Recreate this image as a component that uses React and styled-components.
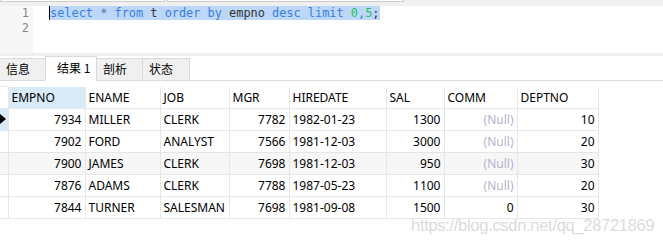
import styled, { createGlobalStyle } from "styled-components";

const GlobalStyles = createGlobalStyle`
  html, body {
    margin: 0;
    padding: 0;
    background: #fff;
  }
  body {
    width: 663px;
    height: 244px;
    overflow: hidden;
    font-family: "Noto Sans", "Noto Sans CJK SC", sans-serif;
  }
`;

const Page = styled.div`
  position: relative;
  width: 663px;
  height: 244px;
  overflow: hidden;
`;

const TopStrip = styled.div`
  height: 6px;
  background: #f0f0f0;
  display: flex;
  gap: 2px;
`;

const StripBox = styled.div`
  width: ${(p) => p.w}px;
  height: 1px;
  background: #fafafa;
  border: 1px solid #cfcfcf;
  border-top: none;
`;

const Editor = styled.div`
  height: 47px;
  display: flex;
`;

const Gutter = styled.div`
  width: 33px;
  background: #f7f7f7;
  color: #8a8a8a;
  font-family: "DejaVu Sans Mono", monospace;
  font-size: 12px;
  line-height: 15px;
  text-align: right;
  padding-right: 4px;
  box-sizing: border-box;
`;

const Code = styled.div`
  padding-left: 17px;
  font-family: "DejaVu Sans Mono", monospace;
  font-size: 11.9px;
  line-height: 15px;
`;

const Line = styled.div`
  height: 15px;
  white-space: pre;
`;

const Selected = styled.span`
  background: #bcd7f7;
  border-left: 1px solid #000;
  margin-left: -1px;
`;

const Tok = styled.span`
  color: ${(p) => p.c};
`;

const Splitter = styled.div`
  height: 3px;
  background: #f0f0f0;
`;

const TabBar = styled.div`
  height: 25px;
  display: flex;
  align-items: flex-end;
  border-bottom: 1px solid #d9d9d9;
  box-sizing: border-box;
`;

const Tab = styled.div`
  width: ${(p) => p.w}px;
  height: ${(p) => (p.active ? 25 : 22)}px;
  box-sizing: border-box;
  background: ${(p) => (p.active ? "#fff" : "#f0f0f0")};
  border: 1px solid #d9d9d9;
  border-left: ${(p) => (p.first ? "none" : "1px solid #d9d9d9")};
  border-bottom: ${(p) => (p.active ? "1px solid #fff" : "none")};
  margin-bottom: ${(p) => (p.active ? -1 : 0)}px;
  margin-left: -1px;
  padding-left: ${(p) => (p.active ? 11 : 6)}px;
  font-family: "Noto Sans CJK SC", sans-serif;
  font-size: 12px;
  line-height: ${(p) => (p.active ? 22 : 20)}px;
  color: #000;
  &:first-child {
    margin-left: 0;
  }
`;

const TableWrap = styled.div`
  padding-top: 5px;
`;

const Grid = styled.table`
  border-collapse: collapse;
  table-layout: fixed;
  font-family: "Noto Sans", sans-serif;
  font-size: 12px;
  color: #000;
`;

const HeadCell = styled.th`
  height: 21px;
  padding: 0 3px;
  text-align: left;
  font-weight: normal;
  border: 1px solid #e6e6e6;
  border-top: none;
  background: ${(p) => (p.sel ? "#d9eaf9" : "#fff")};
  white-space: nowrap;
  overflow: hidden;
`;

const Row = styled.tr`
  background: ${(p) => (p.alt ? "#f7f7f7" : "#fff")};
`;

const Cell = styled.td`
  height: 21px;
  padding: 0 3px;
  border: 1px solid #e6e6e6;
  text-align: ${(p) => (p.num ? "right" : "left")};
  color: ${(p) => (p.nil ? "#b4b4cc" : "#000")};
  white-space: nowrap;
  overflow: hidden;
`;

const Marker = styled.td`
  padding: 0;
  border: 1px solid #e6e6e6;
  border-left: none;
  background: ${(p) => (p.cur ? "#d9eaf9" : "transparent")};
`;

const Arrow = styled.div`
  width: 0;
  height: 0;
  border-top: 5px solid transparent;
  border-bottom: 5px solid transparent;
  border-left: 6px solid #000;
`;

const Watermark = styled.div`
  position: absolute;
  left: 411px;
  top: 217px;
  font-family: "Liberation Sans", Arial, sans-serif;
  font-size: 16.5px;
  letter-spacing: -0.3px;
  line-height: 1;
  color: #dcdcdc;
  white-space: nowrap;
`;

const widths = [8, 77, 75, 69, 60, 97, 58, 73, 81];
const cols = ["EMPNO", "ENAME", "JOB", "MGR", "HIREDATE", "SAL", "COMM", "DEPTNO"];
const rows = [
  ["7934", "MILLER", "CLERK", "7782", "1982-01-23", "1300", null, "10"],
  ["7902", "FORD", "ANALYST", "7566", "1981-12-03", "3000", null, "20"],
  ["7900", "JAMES", "CLERK", "7698", "1981-12-03", "950", null, "30"],
  ["7876", "ADAMS", "CLERK", "7788", "1987-05-23", "1100", null, "20"],
  ["7844", "TURNER", "SALESMAN", "7698", "1981-09-08", "1500", "0", "30"],
];
const numeric = [true, false, false, true, false, true, true, true];

const KW = "#3a7fe0";

export default function App() {
  return (
    <Page>
      <GlobalStyles />
      <TopStrip>
        <StripBox w={163} />
        <StripBox w={235} />
      </TopStrip>
      <Editor>
        <Gutter>
          <div>1</div>
          <div>2</div>
        </Gutter>
        <Code>
          <Line>
            <Selected>
              <Tok c={KW}>select</Tok> <Tok c="#5a7aa8">*</Tok> <Tok c={KW}>from</Tok>{" "}
              <Tok c="#333">t</Tok> <Tok c={KW}>order by</Tok> <Tok c="#333">empno</Tok>{" "}
              <Tok c={KW}>desc</Tok> <Tok c={KW}>limit</Tok> <Tok c="#1fc35a">0</Tok>
              <Tok c={KW}>,</Tok>
              <Tok c="#1fc35a">5</Tok>
              <Tok c="#333">;</Tok>
            </Selected>
          </Line>
          <Line />
        </Code>
      </Editor>
      <Splitter />
      <TabBar>
        <Tab w={46} first>信息</Tab>
        <Tab w={52} active>结果 1</Tab>
        <Tab w={47}>剖析</Tab>
        <Tab w={48}>状态</Tab>
      </TabBar>
      <TableWrap>
        <Grid>
          <colgroup>
            {widths.map((w, i) => (
              <col key={i} style={{ width: w }} />
            ))}
          </colgroup>
          <thead>
            <tr>
              <Marker as="th" />
              {cols.map((c, i) => (
                <HeadCell key={c} sel={i === 0}>
                  {c}
                </HeadCell>
              ))}
            </tr>
          </thead>
          <tbody>
            {rows.map((r, ri) => (
              <Row key={ri} alt={ri === 2}>
                <Marker cur={ri === 0}>{ri === 0 && <Arrow />}</Marker>
                {r.map((v, ci) => (
                  <Cell key={ci} num={numeric[ci]} nil={v === null}>
                    {v === null ? "(Null)" : v}
                  </Cell>
                ))}
              </Row>
            ))}
          </tbody>
        </Grid>
      </TableWrap>
      <Watermark>https://blog.csdn.net/qq_28721869</Watermark>
    </Page>
  );
}
